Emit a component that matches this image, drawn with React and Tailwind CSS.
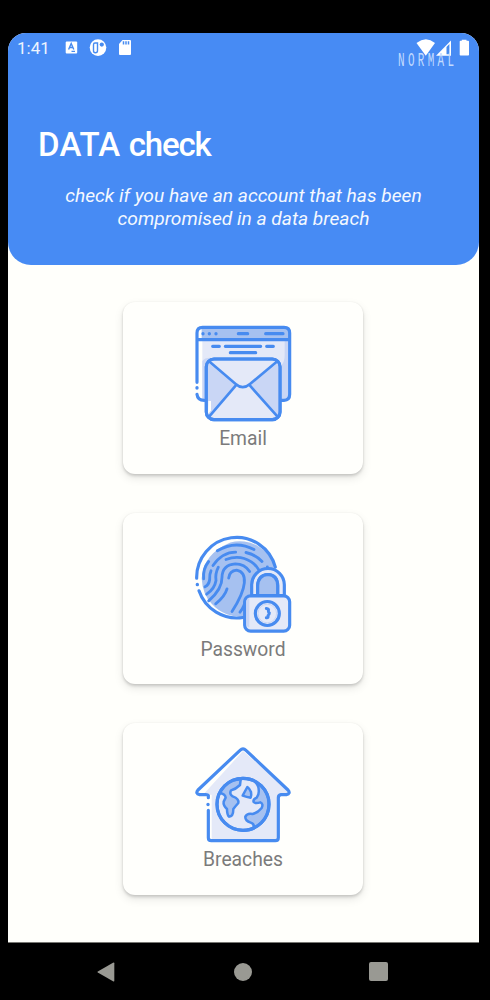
import React from "react";

const BLUE = "#478bf0";
const MID = "#a6c1f0";
const PALE = "#e4e9f8";
const SOFT = "#c9d6f5";

function IconFrame({ viewBox = "24 24 300 300", children }) {
  return (
    <svg
      className="size-[100px] shrink-0"
      viewBox={viewBox}
      fill="none"
      stroke={BLUE}
      strokeWidth="9.5"
      strokeLinecap="round"
      strokeLinejoin="round"
    >
      {children}
    </svg>
  );
}

function EmailIcon() {
  return (
    <IconFrame>
      <path d="M52 74H314V240Q314 256 300 256H52Z" fill={PALE} stroke="none" />
      <path d="M299 74H314V240Q314 252 302 256H290V150Q299 140 299 120Z" fill={SOFT} stroke="none" />
      <path d="M50 38H300Q314 38 314 52V74H50Z" fill={MID} stroke="none" />
      <path d="M52 138Q58 128 76 128V256H52Z" fill={SOFT} stroke="none" />
      <path d="M36 202V54Q36 37 53 37H297Q314 37 314 54V238Q314 256 297 256H289M36 74H314M36 238Q38 256 58 256" />
      <path d="M36 218V219M54 56V56.5M73 56V56.5M93 56V56.5" strokeWidth="10" />
      <path d="M160 56H188M242 56H294M83 94H103M121 94H227M245 94H265M136 113H212" />
      <rect x="64" y="132" width="221" height="182" rx="23" fill={PALE} />
      <path d="M70 143L152 212L70 302Q67 298 67 288V156ZM279 143L194 212L278 302Q281 298 281 288V156Z" fill={SOFT} stroke="none" />
      <path d="M70 258H78V286L69 298Z" fill="#fffffb" stroke="none" />
      <rect x="64" y="132" width="221" height="182" rx="23" />
      <path d="M72 139L152 207Q173 226 195 207L277 139M152 212L73 304M195 212L277 304" strokeWidth="8" />
    </IconFrame>
  );
}

function PasswordIcon() {
  return (
    <IconFrame viewBox="24 25.5 300 300">
      <path d="M136 51A112 112 0 0 1 271 125L180 272A112 112 0 0 1 80 235Q52 205 50 158Q55 85 136 51Z" fill={MID} stroke="none" />
      <path d="M35 158A120 120 0 0 1 271 125M42 196A120 120 0 0 0 174 276" />
      <path d="M37 177V177.5" strokeWidth="10" />
      <g strokeWidth="8.5">
        <path d="M97 76Q151 43 207 72M183 81Q212 87 231 108M123 102Q164 86 199 109Q213 118 222 134M152 80Q112 80 84 120" />
        <path d="M56 160Q53 130 71 108M100 125Q90 145 93 165Q89 190 65 206M60 184Q72 178 74 162Q73 146 78 136" />
        <path d="M194 138Q179 115 151 115Q112 118 111 155Q112 190 71 226M131 158Q133 136 155 134Q181 139 178 172Q175 205 141 258M126 190Q120 212 92 235" />
        <path d="M182 220Q179 242 165 260M247 124V125" />
      </g>
      <path d="M200 210V178A49 49 0 0 1 298 178V210H278V180Q277 148 249 147Q220 148 218 180V210Z" fill={PALE} />
      <path d="M218 210V180Q220 149 249 147Q277 149 278 180V210Z" fill={MID} />
      <rect x="179" y="211" width="135" height="106" rx="18" fill={PALE} />
      <path d="M193 306Q183 303 184 290V229Q184 219 193 216Z" fill={SOFT} stroke="none" />
      <circle cx="247" cy="264" r="36" fill={PALE} />
      <circle cx="247" cy="264" r="28" fill="none" stroke={SOFT} strokeWidth="3" />
      <path d="M244 249Q253 250 250 256Q250 261 253 262Q253 268 249 270Q251 278 244 277" strokeWidth="9" />
    </IconFrame>
  );
}

function BreachesIcon() {
  return (
    <IconFrame viewBox="24 27 300 300">
      <path d="M80 179H54L174 48L311 166Q315 179 302 179H280V317H80Z" fill={PALE} stroke="none" />
      <path d="M70 188V181Q69 179 62 179H44Q30 176 39 165L165 46Q174 37 183 46L309 165Q318 176 304 179H288Q280 180 280 188V308Q280 317 271 317H79Q70 317 70 308V226" />
      <path d="M69 208V208.5" strokeWidth="10" />
      <circle cx="174" cy="208" r="78" fill={PALE} />
      <g fill={MID} strokeWidth="7.5">
        <path d="M118 154Q138 132 167 134L165 150Q153 162 138 166Q132 177 143 184Q163 191 160 204Q151 214 145 222Q145 245 132 245Q126 239 126 222Q114 211 116 200L122 188Q121 177 104 174Z" />
        <path d="M209 139Q240 156 251 193Q253 230 238 252Q225 271 206 278Q209 267 197 263Q180 258 181 245Q187 233 203 237Q219 233 230 219Q236 206 226 202Q211 207 206 201Q203 194 215 188Q223 178 221 164Q222 153 209 139Z" />
      </g>
      <path d="M187 156Q194 161 198 171Q200 180 197 188Q185 186 173 182Q178 172 187 156Z" fill={MID} strokeWidth="7.5" />
      <circle cx="174" cy="208" r="78" />
    </IconFrame>
  );
}

function Card({ icon, label }) {
  return (
    <div className="flex h-[171.5px] w-[240px] shrink-0 flex-col items-center rounded-[12px] bg-[#fffffc] pt-[21px] shadow-[0_2px_3px_rgba(0,0,0,0.15),0_4px_10px_rgba(0,0,0,0.1),0_0_2px_rgba(0,0,0,0.06)]">
      {icon}
      <span className="mt-[2px] text-[19.3px] leading-[28px] text-[#7b7b7b]">{label}</span>
    </div>
  );
}

function StatusBar() {
  return (
    <div className="relative flex h-[29px] items-center pl-[9px] pr-[8px] text-white">
      <span className="w-[33px] text-[17px] leading-[20px] text-[#edf4ff]">1:41</span>
      <svg className="ml-[15px] h-[20px] w-[70px]" viewBox="0 0 70 20" fill="white">
        <rect x="0.7" y="3.4" width="11.5" height="12" rx="1" />
        <path d="M3.6 11.5L6.2 5.5L8.8 11.5M4.5 9.5H8M6.5 13.4H10" fill="none" stroke={BLUE} strokeWidth="1.4" />
        <circle cx="33" cy="9.6" r="8.3" />
        <path d="M30 5H32.5V12.7Q32.5 14.7 30.4 14.7Q28.5 14.7 28.5 12.7V6.7Q28.5 5 30 5Z" fill="none" stroke={BLUE} strokeWidth="1.4" />
        <circle cx="36.8" cy="6.6" r="2.1" fill={BLUE} />
        <path d="M57.5 2H65Q66 2 66 3V16Q66 17 65 17H55Q54 17 54 16V6Z" />
        <path d="M58.5 3.2V6.5M61 3.2V6.5M63.5 3.2V6.5" stroke={BLUE} strokeWidth="1.5" />
      </svg>
      <svg className="ml-auto h-[20px] w-[56px] -translate-y-[1.5px]" viewBox="0 0 56 20" fill="white">
        <path d="M1.5 6.4Q11 -0.8 20 6.4L10.8 19.3Z" />
        <path d="M36 4V19.3H21Z" />
        <path d="M31.5 10.5L34.4 7.5V17.8H31.5Z" fill={BLUE} />
        <path d="M46.8 4.2V3.2H51.5V4.2H53.2Q54 4.2 54 5V18.2Q54 19 53.2 19H45.5Q44.7 19 44.7 18.2V5Q44.7 4.2 45.5 4.2Z" />
      </svg>
      <span
        className="absolute left-[390px] top-[18px] origin-left scale-x-[0.52] whitespace-nowrap text-[21px] leading-[20px] tracking-[6.4px] text-[#c2dbff]"
        style={{ fontFamily: '"Liberation Mono", monospace' }}
      >
        NORMAL
      </span>
    </div>
  );
}

export default function App() {
  return (
    <div
      className="flex h-[1000px] w-[490px] flex-col overflow-hidden bg-black pl-[8px] pr-[11px] pt-[33px]"
      style={{ fontFamily: "Roboto, sans-serif" }}
    >
      <div className="flex h-[910px] shrink-0 flex-col overflow-hidden rounded-t-[18px] border-b border-[#777773] bg-[#fffffb]">
        <header className="h-[232px] shrink-0 rounded-b-[23px] bg-[#478bf4]">
          <StatusBar />
          <h1 className="ml-[30px] mt-[63px] whitespace-nowrap text-[33px] font-medium leading-[40px] tracking-[0.2px] text-white">
            DATA <span className="tracking-[-1.2px]">check</span>
          </h1>
          <p className="mt-[20px] text-center text-[19.2px] italic leading-[22.5px] text-[#f4f8ff]">
            check if you have an account that has been
            <br />
            compromised in a data breach
          </p>
        </header>
        <main className="flex flex-col items-center gap-[39px] pr-px pt-[37px]">
          <Card icon={<EmailIcon />} label="Email" />
          <Card icon={<PasswordIcon />} label="Password" />
          <Card icon={<BreachesIcon />} label="Breaches" />
        </main>
      </div>
      <nav className="flex h-[57px] shrink-0 items-center justify-between pl-[88px] pr-[91px]">
        <svg className="h-[20px] w-[20px]" viewBox="0 0 20 20" fill="#999993">
          <path d="M17 0.7Q18.3 0 18.3 1.2V18.8Q18.3 20 17 19.3L1.8 10.6Q0.8 10 1.8 9.4Z" />
        </svg>
        <span className="size-[18px] rounded-full bg-[#999993]" />
        <span className="size-[19px] rounded-[2px] bg-[#999993]" />
      </nav>
    </div>
  );
}
